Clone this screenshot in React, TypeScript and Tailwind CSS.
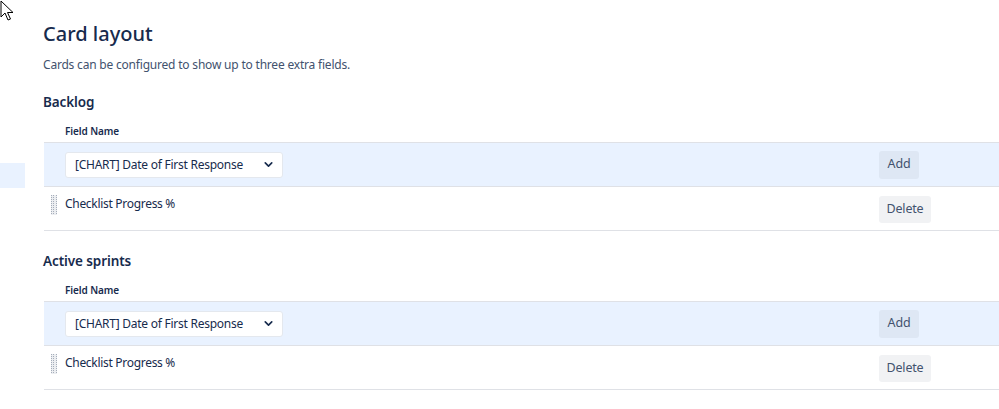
import { ChevronDown } from "lucide-react";

function Cursor() {
  return (
    <svg className="absolute left-0 top-0" width="16" height="22" viewBox="0 0 16 22">
      <path d="M1 1 L1 17 L5 13 L8 20 L10.5 19 L7.5 12.5 L13 12.5 Z" fill="#fff" stroke="#000" strokeWidth="1" strokeLinejoin="round" />
    </svg>
  );
}

function DragHandle() {
  return (
    <div className="grid grid-cols-3 gap-px w-[6px] h-[20px] content-start bg-[#eceef1]">
      {Array.from({ length: 30 }).map((_, i) => (
        <span key={i} className="w-[1px] h-[1px] bg-[#a5adba]" />
      ))}
    </div>
  );
}

function FieldTable() {
  return (
    <div>
      <div className="pl-[21px] h-[22px] flex items-center text-[10px] tracking-[-0.1px] font-semibold text-[#172b4d]">Field Name</div>
      <div className="border-t border-b border-[#dfe1e6] bg-[#e9f2ff] flex items-center h-[45px]">
        <div className="flex-1 pl-[21px]">
          <div className="w-[218px] h-[26px] bg-white border border-[#e4e8ee] rounded-[3px] flex items-center justify-between pl-[9px] pr-[7px] text-[12px] tracking-[-0.25px] text-[#172b4d] whitespace-nowrap">
            <span>[CHART] Date of First Response</span>
            <ChevronDown className="w-[13px] h-[13px] text-[#172b4d]" strokeWidth={3} />
          </div>
        </div>
        <div className="w-[120px]">
          <button className="h-[28px] w-[40px] rounded-[3px] bg-[#dee7f4] text-[12.5px] tracking-[-0.2px] text-[#42526e]">Add</button>
        </div>
      </div>
      <div className="flex items-start h-[44px] border-b border-[#dfe1e6]">
        <div className="flex-1 flex items-start pl-[7px] pt-[8px] gap-[8px]">
          <DragHandle />
          <span className="text-[12px] tracking-[-0.3px] text-[#172b4d] leading-[18px]">Checklist Progress %</span>
        </div>
        <div className="w-[120px] pt-[8px]">
          <button className="h-[27px] w-[52px] rounded-[3px] bg-[#f1f2f4] text-[12.5px] tracking-[-0.2px] text-[#42526e]">Delete</button>
        </div>
      </div>
    </div>
  );
}

export default function App() {
  return (
    <div className="relative w-full h-[409px] bg-white overflow-hidden flex" style={{ fontFamily: '"Noto Sans", "Open Sans", sans-serif' }}>
      <Cursor />
      <aside className="w-[25px] shrink-0 pt-[163px]">
        <div className="h-[25px] bg-[#e9f2ff]" />
      </aside>
      <main className="flex-1 pl-[19px]">
        <div className="-ml-[1px]">
          <h1 className="mt-[19px] text-[20px] leading-[30px] text-[#172b4d] font-medium">Card layout</h1>
          <p className="mt-[7px] text-[12px] tracking-[-0.2px] leading-[18px] text-[#42526e]">Cards can be configured to show up to three extra fields.</p>
          <h2 className="mt-[17px] text-[13.5px] tracking-[-0.1px] leading-[22px] font-semibold text-[#172b4d]">Backlog</h2>
        </div>
        <div className="mt-[7px]">
          <FieldTable />
        </div>
        <h2 className="-ml-[1px] mt-[19px] text-[13.5px] tracking-[-0.1px] leading-[22px] font-semibold text-[#172b4d]">Active sprints</h2>
        <div className="mt-[7px]">
          <FieldTable />
        </div>
      </main>
    </div>
  );
}
